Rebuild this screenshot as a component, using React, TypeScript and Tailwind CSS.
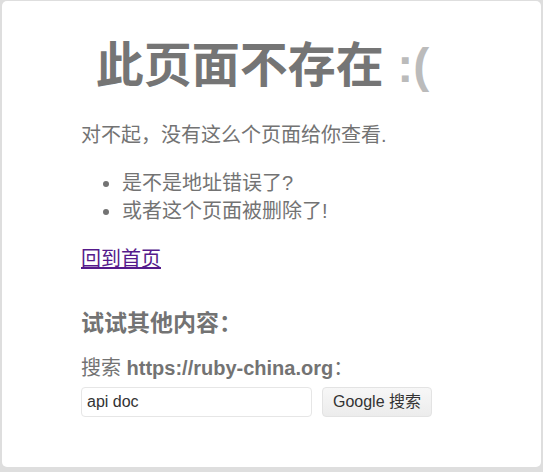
import React from "react";

export default function App() {
  const font = { fontFamily: '"Liberation Sans", "Noto Sans CJK SC", sans-serif' };
  return (
    <div className="w-[543px] h-[472px] bg-[#dedede] pt-px pl-[2px] pr-[2px] pb-[5px]" style={font}>
      <div className="h-full bg-white rounded-[5px] pt-[36px] pl-[79px] pr-[20px] text-[#737373]">
        <h1 className="text-center text-[48px] leading-[58px] font-bold text-[#757575] -ml-[79px] pl-[2px]">
          此页面不存在 <span className="text-[#bbb]">:(</span>
        </h1>
        <p className="mt-[26px] text-[20px] leading-[28px]">对不起，没有这么个页面给你查看.</p>
        <ul className="mt-[20px] list-disc pl-[41px] text-[20px] leading-[28px]">
          <li>是不是地址错误了?</li>
          <li>或者这个页面被删除了!</li>
        </ul>
        <p className="mt-[20px] text-[20px] leading-[28px]">
          <a href="#" className="underline text-[#551a8b]">回到首页</a>
        </p>
        <h3 className="mt-[34px] text-[23px] leading-[32px] font-bold">试试其他内容：</h3>
        <p className="mt-[15px] text-[20px] leading-[28px]">
          搜索 <b>https://ruby-china.org</b>：
        </p>
        <div className="mt-[5px] flex gap-[10px]">
          <input
            defaultValue="api doc"
            className="w-[231px] h-[30px] border border-[#e6e6e6] rounded-[4px] px-[5px] text-[16px] text-[#333] outline-none"
            style={font}
          />
          <button className="w-[110px] h-[30px] border border-[#e3e3e3] rounded-[4px] bg-gradient-to-b from-[#f7f7f7] to-[#ececec] text-[16px] text-[#333]">
            Google 搜索
          </button>
        </div>
      </div>
    </div>
  );
}
